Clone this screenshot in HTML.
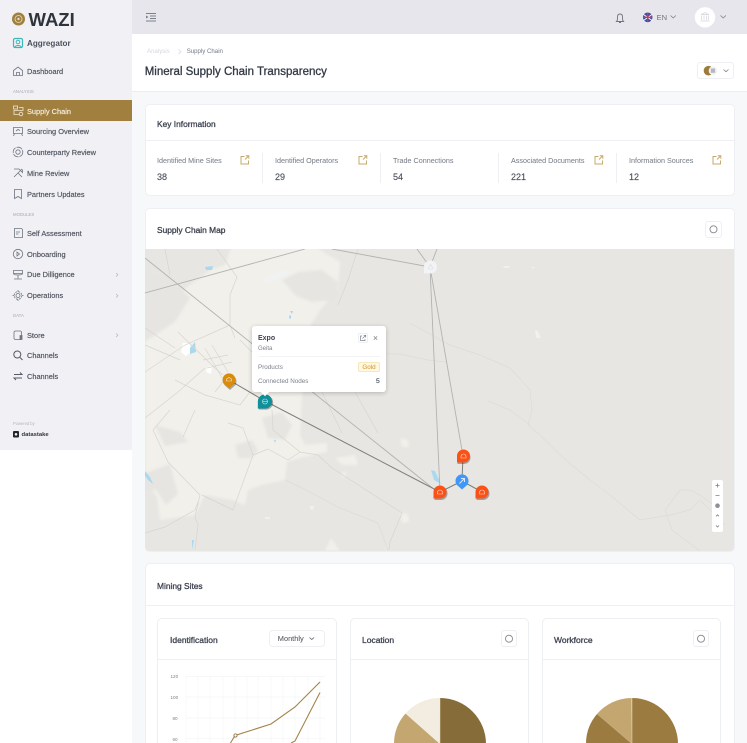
<!DOCTYPE html>
<html lang="en"><head><meta charset="utf-8"><title>Mineral Supply Chain Transparency</title>
<style>
html,body{margin:0;padding:0;width:747px;height:743px;overflow:hidden}
body{position:relative;background:#fff;font-family:"Liberation Sans",sans-serif;color:#4a4f5c}
#page{position:absolute;left:0;top:0;width:747px;height:743px;overflow:hidden;background:#f7f8fa;filter:blur(.2px)}
.a{position:absolute}
.t{position:absolute;white-space:nowrap;line-height:12px;height:12px;margin-top:.5px}
.nav{font-size:7.4px;left:27px;color:#4d525e;-webkit-text-stroke:.15px}
.sec{font-size:4.3px;left:13px;color:#a5a8b2;margin-top:1px}
.h{font-size:8.4px;color:#3d4350;-webkit-text-stroke:.3px}
.lb{font-size:7.2px;color:#7c818c;-webkit-text-stroke:.05px}
.v{font-size:9px;color:#4d525e;-webkit-text-stroke:.15px}
.card{position:absolute;background:#fff;border:1px solid #eeeff2;border-radius:5px;box-sizing:border-box}
.ln{position:absolute;background:#eff0f3;height:1px}
.dv{position:absolute;width:1px;background:#eff0f3;top:153px;height:30px}
.btn{position:absolute;background:#fff;border:1px solid #eeeff2;border-radius:3px;box-sizing:border-box}
svg{position:absolute;overflow:visible}
</style></head><body><div id="page">

<!-- sidebar -->
<div class="a" style="left:0;top:0;width:132px;height:450px;background:#f1f1f5"></div>
<div class="a" style="left:0;top:450px;width:132px;height:293px;background:#fff"></div>
<svg style="left:0;top:0" width="132" height="450" viewBox="0 0 132 450" fill="none">
<circle cx="18.500" cy="19" r="6.500" fill="#a0803f"/><circle cx="18.500" cy="19" r="3.500" fill="none" stroke="#e8dcc3" stroke-width=".8"/><circle cx="18.500" cy="19" r="1.200" fill="#e8dcc3"/>
<rect x="13.500" y="38.500" width="9" height="9" rx="1.500" stroke="#3fb5b8" stroke-width="1.200"/><circle cx="18" cy="42" r="1.800" stroke="#3fb5b8"/><path d="M15 47c.5-2 5.500-2 6 0" stroke="#3fb5b8"/>
<g stroke="#6f7480" stroke-width=".8">
<path d="M13.500 70.500 18 67l4.500 3.500V75.500h-9zM16.500 75.500v-3h3v3"/>
<path d="M13.500 127.500h9v6h-9zM14.500 133.500l-1 2.500M21.500 133.500l1 2.500M16 131l2-1.500 2 1"/>
<circle cx="18" cy="152" r="4.800" stroke-dasharray="6 1"/><circle cx="18" cy="152" r="2.200"/>
<path d="M14 169l5 0 3.500 3.500v-3M22 169l-8 8M18 173l4 4"/>
<path d="M14.500 189.500h7V198.500l-3.500-2-3.500 2z"/>
<path d="M14.500 228.500h7l1 1V237.500h-8zM16 232h4M16 234h2.500"/>
<circle cx="18" cy="254" r="4.700"/><path d="M17 252l2.500 2-2.500 2z"/>
<path d="M13.500 270.500h9v3h-9zM13.500 273.500c0 2 9 2 9 0M18 275.500v3M14 279h8"/>
<circle cx="18" cy="295.500" r="2"/><circle cx="18" cy="295.500" r="3.800" stroke-dasharray="2 1"/><path d="M18 290v1.500M18 299.500v1.500M12.500 295.500H14M22 295.500h1.500"/>
<rect x="14" y="331" width="7.500" height="8.500" rx="1.500"/><path d="M20 335.500h2v4h-2z" fill="#6f7480"/>
</g>
<g stroke="#555a66" stroke-width="1">
<circle cx="17.300" cy="354.500" r="3.500"/><path d="M20 357.500l2.500 2.500"/>
<path d="M14 374.500h8l-2-2M22 378h-8l2 2"/>
</g>
<path d="M116 273l2 1.800-2 1.800M116 294l2 1.800-2 1.800M116 333.500l2 1.800-2 1.800" stroke="#b5b8c0" stroke-width=".7"/>
<rect x="13" y="431" width="6" height="6.500" rx="1" fill="#22252c"/><circle cx="16" cy="434.300" r="1.300" fill="#f1f1f5"/>
</svg>
<div class="a" style="left:0;top:100px;width:132px;height:21px;background:#a1803f"></div>
<svg style="left:0;top:100px" width="40" height="21" fill="none" stroke="#f1e8d6" stroke-width=".8"><rect x="13.500" y="6" width="4" height="3"/><path d="M19 7.500h4v3h-9v4h5"/><circle cx="21" cy="14" r="1.800"/></svg>
<div class="t" style="left:28.500px;top:9px;font-size:18.500px;line-height:20px;height:20px;font-weight:700;color:#2f333c">WAZI</div>
<div class="t" style="left:27px;top:37px;font-size:8.100px;font-weight:700;color:#4a505c">Aggregator</div>
<div class="t nav" style="top:65px">Dashboard</div>
<div class="t sec" style="top:85px">ANALYSIS</div>
<div class="t nav" style="top:105px;color:#f5efe2">Supply Chain</div>
<div class="t nav" style="top:125px">Sourcing Overview</div>
<div class="t nav" style="top:146px">Counterparty Review</div>
<div class="t nav" style="top:167px">Mine Review</div>
<div class="t nav" style="top:188px">Partners Updates</div>
<div class="t sec" style="top:208px">MODULES</div>
<div class="t nav" style="top:227px">Self Assessment</div>
<div class="t nav" style="top:248px">Onboarding</div>
<div class="t nav" style="top:268px">Due Dilligence</div>
<div class="t nav" style="top:289px">Operations</div>
<div class="t sec" style="top:309px">DATA</div>
<div class="t nav" style="top:329px">Store</div>
<div class="t nav" style="top:349px">Channels</div>
<div class="t nav" style="top:370px">Channels</div>
<div class="t" style="left:13px;top:417px;font-size:4.100px;color:#b2b5bd">Powered by</div>
<div class="t" style="left:21.500px;top:428px;font-size:5.900px;font-weight:700;color:#33363e">datastake</div>

<!-- top bar -->
<div class="a" style="left:132px;top:0;width:615px;height:34px;background:#e6e6ec"></div>
<svg style="left:132px;top:0" width="615" height="34" fill="none">
<path d="M14 13.500h10M18 16h6M18 18.500h6M14 21h10" stroke="#7d818b" stroke-width="1"/><path d="M14 15.500l2.500 1.500-2.500 1.500z" fill="#7d818b"/>
<path d="M484.500 21.500h7c-1.300-1.300-1-2.500-1-4.500 0-1.800-1-3-2.500-3s-2.500 1.200-2.500 3c0 2 .3 3.200-1 4.500zM487 22.500h2" stroke="#70747f" stroke-width=".9"/>
<circle cx="515.700" cy="17.300" r="4.800" fill="#3f4fa3"/><path d="M511.500 14.500l8.500 6M511.500 20.500l8.500-6" stroke="#fff" stroke-width=".9"/><path d="M515.700 12.500v9.600M511 17.300h9.500" stroke="#d8334a" stroke-width="1.300"/>
<path d="M538.500 15.500l2.700 2.500 2.700-2.500M588.500 15.500l2.700 2.500 2.700-2.500" stroke="#7d818b" stroke-width=".8"/>
<circle cx="573" cy="17.300" r="10.200" fill="#fff"/>
<path d="M569 14.500l4-2 4 2zM569.500 15.500v4.500M572 15.500v4.500M574.500 15.500v4.500M576.500 15.500v4.500M568.500 21h9" stroke="#dcdde2" stroke-width=".9"/>
</svg>
<div class="t" style="left:656.500px;top:11.300px;font-size:7.600px;color:#73777f">EN</div>

<!-- page head -->
<div class="a" style="left:132px;top:34px;width:615px;height:57px;background:#fff"></div>
<div class="a" style="left:132px;top:91px;width:615px;height:1px;background:#ecedf0"></div>
<div class="t" style="left:147px;top:45.500px;font-size:6.100px;color:#d5d7de">Analysis</div>
<svg style="left:177px;top:49px" width="6" height="6" fill="none"><path d="M1.500 .5l2.500 2.200-2.500 2.200" stroke="#ccced6" stroke-width=".6"/></svg>
<div class="t" style="left:186.700px;top:45.500px;font-size:6.100px;color:#747986">Supply Chain</div>
<div class="t" style="left:144.700px;top:65px;font-size:11.500px;color:#333945;-webkit-text-stroke:.3px">Mineral Supply Chain Transparency</div>
<div class="btn" style="left:697px;top:62px;width:37px;height:17px"></div>
<svg style="left:697px;top:62px" width="37" height="17" fill="none"><circle cx="11.500" cy="8.700" r="4.800" fill="#9c7c3e"/><circle cx="16" cy="8.700" r="4.300" fill="#f1f2f6"/><rect x="13.800" y="6.500" width="4.300" height="4.300" fill="#b5b8c2"/><path d="M26.500 7.500l2.500 2.200 2.500-2.200" stroke="#7d818b" stroke-width=".8"/></svg>

<!-- key info -->
<div class="card" style="left:145px;top:104px;width:590px;height:92px"></div>
<div class="ln" style="left:146px;top:140px;width:588px"></div>
<div class="t h" style="left:157px;top:117px">Key Information</div>
<div class="t lb" style="left:157px;top:154px">Identified Mine Sites</div><div class="t v" style="left:157px;top:170px">38</div>
<div class="t lb" style="left:275px;top:154px">Identified Operators</div><div class="t v" style="left:275px;top:170px">29</div>
<div class="t lb" style="left:393px;top:154px">Trade Connections</div><div class="t v" style="left:393px;top:170px">54</div>
<div class="t lb" style="left:511px;top:154px">Associated Documents</div><div class="t v" style="left:511px;top:170px">221</div>
<div class="t lb" style="left:629px;top:154px">Information Sources</div><div class="t v" style="left:629px;top:170px">12</div>
<div class="dv" style="left:262px"></div><div class="dv" style="left:380px"></div><div class="dv" style="left:498px"></div><div class="dv" style="left:616px"></div>
<svg style="left:0;top:0" width="747" height="200" fill="none" stroke="#c9a96c" stroke-width="1">
<path d="M244.500 156.500h-3.500v7.500h7.500v-3.500M245 159.500l3.500-3.500M245.800 155.800h3v3"/>
<path d="M362.500 156.500h-3.500v7.500h7.500v-3.500M363 159.500l3.500-3.500M363.800 155.800h3v3"/>
<path d="M598.500 156.500h-3.500v7.500h7.500v-3.500M599 159.500l3.500-3.500M599.800 155.800h3v3"/>
<path d="M716.500 156.500h-3.500v7.500h7.500v-3.500M717 159.500l3.500-3.500M717.800 155.800h3v3"/>
</svg>

<!-- map card -->
<div class="card" style="left:145px;top:208px;width:590px;height:344px"></div>
<div class="t h" style="left:157px;top:223px">Supply Chain Map</div>
<div class="btn" style="left:705px;top:221px;width:17px;height:17px"></div>
<svg style="left:705px;top:221px" width="17" height="17" fill="none"><circle cx="8.500" cy="8.300" r="3.500" stroke="#83878f" stroke-width=".9"/></svg>

<svg style="left:145px;top:249px;overflow:hidden;border-radius:0 0 4px 4px" width="589" height="302" viewBox="145 249 589 302" fill="none">
<defs>
<path id="bl" d="M-6.500 6.500V0A6.500 6.500 0 1 1 0 6.500Z"/>
<path id="dn" d="M0 8.500L-4.800 4.300A6.500 6.500 0 1 1 4.800 4.300Z"/>
<filter id="s" x="-10%" y="-10%" width="120%" height="120%"><feGaussianBlur stdDeviation="1.300"/></filter>
</defs>
<rect x="145" y="249" width="589" height="302" fill="#e7e6e2"/>
<!-- land -->
<g filter="url(#s)">
<path fill="#f2f0ea" d="M145 325L170 300L210 270L225 265L232 245L312 245L340 262L338 290L320 310L305 335L302 400L300 435L305 445L327 443L327 452L300 458L287 462L285 480L262 485L248 490L245 505L232 500L205 495L195 515L160 520L157 497L145 480Z"/>
<path fill="#e6e5e1" d="M140 272L170 276L190 298L175 322L140 345ZM282 280L298 272L322 270L338 282L336 300L312 302L296 296ZM235 445L252 440L258 450L252 458L238 458ZM140 475L170 464L178 494L166 505L156 490L140 490ZM155 425L180 432L188 442L165 446ZM262 418L282 412L292 425L285 440L268 438Z"/>
<path fill="#f2f0ea" d="M335 458L355 455L358 465L342 465ZM400 438L408 440L409 447L402 447ZM400 513L408 514L409 522L402 523ZM325 551L331 538L340 551ZM342 472L346 472L346 477L342 477Z"/>
</g>
<path fill="#f2f0ea" d="M535 330L538 331L541 338L536 338ZM503 266L510 266L509 268L504 268ZM531 267L535 267L533 269ZM310 506L314 506L313 510L310 509ZM265 517L270 517L270 519L265 519Z"/>
<!-- water / white -->
<path fill="#fff" d="M183 343L189 343L192 351L186 356L181 352Z M207 367L212 366L211 374L206 372Z"/>
<path fill="#a9d9f0" d="M190 348L195 342L196 352L190 354Z M205 267L213 266L212 270L206 270Z M290 311L293 311L292 314Z M289 316L291 315L291 319L289 318Z M145 471L150 477L153 484L148 480L145 476Z M431 470L435 471L441 484L434 480Z M274 440L276 440L275 443Z M192 540L194 540L192 550Z"/>
<path fill="#f0f1f3" d="M258 283L282 270L292 272L272 282Z"/>
<!-- roads -->
<g stroke="#d6d5d0" stroke-width=".7">
<path d="M217 249L237 277L230 295L230 325L235 338M165 249L170 275M230 325L185 345L145 372M145 328L175 348M178 332L215 368L223 375M145 418L178 392L205 368"/>
<path d="M153 430L168 462L200 495L195 517L198 525L195 550M153 430L170 410M195 410L183 437M228 423L243 428L253 455L233 510L202 495M253 455L268 449L288 460L300 452L273 430L272 410M300 452L318 455L332 468L402 513L390 542L389 550M145 533L165 527L195 510L198 502"/>
<path d="M205 348L222 378M212 345L228 372M203 360L228 355M207 368L232 362M175 380L205 395L240 405L250 392M228 375L215 392M240 340L252 352L262 340M145 345L180 360"/>
<path d="M322 392L342 433M355 392L378 433M338 305L348 280L358 249"/>
</g>
<g stroke="#dddcd7" stroke-width=".7">
<path d="M410 323L450 345L480 355L510 368L530 390L532 410L528 425L540 435L560 455L590 480L610 495L640 520L670 515L690 510L700 500L725 525M488 401L510 410L530 425"/>
<path d="M345 353L400 354L428 360L446 362M285 480L302 488L338 507L378 523L388 550"/>
<path d="M700 551L672 530L665 510L680 490L690 490L700 495L720 510"/>
</g>
<!-- grey connection lines -->
<g stroke="#b2b3b1" stroke-width=".9">
<path d="M145 293L305 249M145 258L435 490M332 249L430 267M417 249L430 267M437 249L430 267M430 267L463 456M430 267L440 492"/>
</g>
<g stroke="#7e7f7d" stroke-width="1">
<path d="M229 380L265 401L440 492"/><path d="M440 492L462 481L482 492M463 456L462 481"/>
</g>
<!-- markers -->
<g fill="#000" opacity=".3">
<use href="#dn" x="230" y="381.500"/><use href="#bl" transform="translate(266 402.500) scale(1.100)"/><use href="#bl" x="464" y="457.500"/><use href="#bl" x="441" y="493.500"/><use href="#bl" x="483" y="493.500"/>
</g>
<use href="#dn" x="229" y="380" fill="#d98c0c"/>
<use href="#bl" transform="translate(265 401.500) scale(1.100)" fill="#10909a"/>
<use href="#bl" x="430.500" y="267" fill="#f2f3f5"/>
<use href="#bl" x="463.500" y="456" fill="#fb5116"/>
<use href="#bl" x="440" y="492" fill="#fb5116"/>
<use href="#bl" x="482" y="492" fill="#fb5116"/>
<use href="#dn" x="462" y="481" fill="#3f97f7"/>
<g stroke="#fff" stroke-width=".6" opacity=".8">
<path d="M226.500 381v-2l2.500-1.500 2.500 1.500v2z"/><circle cx="265" cy="401.500" r="2.500"/><path d="M262.500 401.500h5"/>
<path d="M428.800 269c-.8-2 1-3 1.700-4.500 1 1.500 2.500 2.500 1.700 4.500z" stroke="#d2d4da"/>
<path d="M461 458l0-1.500a2.500 2.500 0 0 1 5 0v1.500zM437.500 494l0-1.500a2.500 2.500 0 0 1 5 0v1.500zM479.500 494l0-1.500a2.500 2.500 0 0 1 5 0v1.500z"/>
<path d="M459.500 483.500l5-5M461 478.500h3.500V482" stroke-width="1"/>
</g>
</svg>

<!-- popup -->
<div class="a" style="left:252px;top:326px;width:134px;height:66px;background:#fff;border-radius:3px;box-shadow:0 1px 5px rgba(0,0,0,.22)"></div>
<div class="a" style="left:262px;top:389px;width:6px;height:6px;background:#fff;transform:rotate(45deg)"></div>
<div class="t" style="left:258px;top:332px;font-size:7px;color:#3f4450;font-weight:700">Expo</div>
<div class="t" style="left:258px;top:342px;font-size:6px;color:#7b808b">Geita</div>
<div class="a" style="left:258px;top:356px;width:122px;height:1px;background:#f2f3f5"></div>
<div class="t" style="left:258px;top:361px;font-size:6.300px;color:#7b808b">Products</div>
<div class="t" style="left:258px;top:375px;font-size:6.300px;color:#7b808b">Connected Nodes</div>
<div class="a" style="left:358px;top:362px;width:22px;height:10px;box-sizing:border-box;background:#fff8e4;border:1px solid #f8e8b8;border-radius:2px"></div>
<div class="t" style="left:358px;top:361px;width:22px;text-align:center;font-size:6.300px;color:#d9a23a;-webkit-text-stroke:.1px">Gold</div>
<div class="t" style="left:376px;top:375px;font-size:6.800px;color:#4a4f5c;-webkit-text-stroke:.15px">5</div>
<div class="btn" style="left:357.500px;top:333px;width:10px;height:10px;border-radius:2px"></div>
<svg style="left:357px;top:332px" width="26" height="12" fill="none" stroke="#7f838d" stroke-width=".7"><path d="M5 4H3.500v4.500H8V7M5.500 6.500L8.500 3.500M6.500 3.300h2.200v2.200"/><path d="M16.800 4.300l3.400 3.400M20.200 4.300l-3.400 3.400"/></svg>

<!-- map controls -->
<div class="a" style="left:712px;top:480px;width:11px;height:52px;background:#fff;border-radius:2px"></div>
<svg style="left:712px;top:480px" width="11" height="52" fill="none" stroke="#7c808a" stroke-width=".8"><path d="M3.500 5.500h4M5.500 3.500v4M3.500 15.500h4M4 36.300l1.500-1.500 1.500 1.500M4 45.500l1.500 1.500 1.500-1.500"/><circle cx="5.500" cy="25.700" r="2.300" fill="#8d9098" stroke="none"/></svg>

<!-- mining sites -->
<div class="card" style="left:145px;top:563px;width:590px;height:200px"></div>
<div class="ln" style="left:146px;top:605px;width:588px"></div>
<div class="t h" style="left:157px;top:579px">Mining Sites</div>

<div class="card" style="left:157px;top:618px;width:180px;height:140px"></div>
<div class="card" style="left:350px;top:618px;width:179px;height:140px"></div>
<div class="card" style="left:542px;top:618px;width:179px;height:140px"></div>
<div class="ln" style="left:158px;top:659px;width:178px"></div>
<div class="ln" style="left:351px;top:659px;width:177px"></div>
<div class="ln" style="left:543px;top:659px;width:177px"></div>
<div class="t h" style="left:170px;top:633px;font-size:8.500px">Identification</div>
<div class="t h" style="left:362px;top:633px;font-size:8.500px">Location</div>
<div class="t h" style="left:554px;top:633px;font-size:8.500px">Workforce</div>
<div class="btn" style="left:269px;top:630px;width:56px;height:17px;border-radius:4px"></div>
<div class="t" style="left:277.800px;top:632.500px;font-size:7.400px;color:#5a5f6b;-webkit-text-stroke:.1px">Monthly</div>
<svg style="left:0;top:0" width="747" height="743" fill="none"><path d="M309.500 637.500l2.300 2 2.300-2" stroke="#555a66" stroke-width=".8"/></svg>
<div class="btn" style="left:501px;top:630px;width:16px;height:17px"></div>
<div class="btn" style="left:693px;top:630px;width:16px;height:17px"></div>
<svg style="left:0;top:0;pointer-events:none" width="747" height="743" viewBox="0 0 747 743" fill="none">
<circle cx="509" cy="638.700" r="3.500" stroke="#83878f" stroke-width=".9"/>
<circle cx="701" cy="638.700" r="3.500" stroke="#83878f" stroke-width=".9"/>
<!-- chart grid -->
<g stroke="#f4f5f6" stroke-width=".7">
<path d="M186 676V743M198 676V743M210 676V743M223 676V743M235 676V743M247 676V743M258 676V743M271 676V743M283 676V743M295 676V743M308 676V743M320 676V743"/>
<path d="M186 676.500H325M186 697H325M186 718H325M186 738.700H325"/>
</g>
<path d="M230.500 743L235 735.500L271 724L295 707L320 682" stroke="#a3834a" stroke-width="1.100"/>
<path d="M291 743L295 741L320 692.500" stroke="#a3834a" stroke-width="1.100"/>
<circle cx="235.500" cy="735.500" r="1.600" fill="#fff" stroke="#8a6f3c" stroke-width=".8"/>
<!-- pies -->
<path d="M440 744V698A46 46 0 0 1 486 744Z" fill="#866c38"/>
<path d="M440 744L405.500 713.500A46 46 0 0 0 394 744Z" fill="#c4a671"/>
<path d="M440 744L405.500 713.500A46 46 0 0 1 439.500 698Z" fill="#f3ece0"/>
<path d="M632 744V698A46 46 0 0 1 678 744Z" fill="#9b7b3f"/>
<path d="M632 744L597 714A46 46 0 0 0 586 744Z" fill="#9b7b3f"/>
<path d="M632 744L597 714A46 46 0 0 1 631.500 698Z" fill="#c4a671"/>
<path d="M632 744V698" stroke="#e5d9c0" stroke-width=".5"/>
<path d="M440 744V698" stroke="#e5d9c0" stroke-width=".5"/>
</svg>
<div class="t" style="left:170.500px;top:670.500px;font-size:4.600px;color:#7d818b">120</div>
<div class="t" style="left:170.500px;top:691px;font-size:4.600px;color:#7d818b">100</div>
<div class="t" style="left:172.500px;top:712px;font-size:4.600px;color:#7d818b">80</div>
<div class="t" style="left:172.500px;top:733px;font-size:4.600px;color:#7d818b">60</div>
</div></body></html>
